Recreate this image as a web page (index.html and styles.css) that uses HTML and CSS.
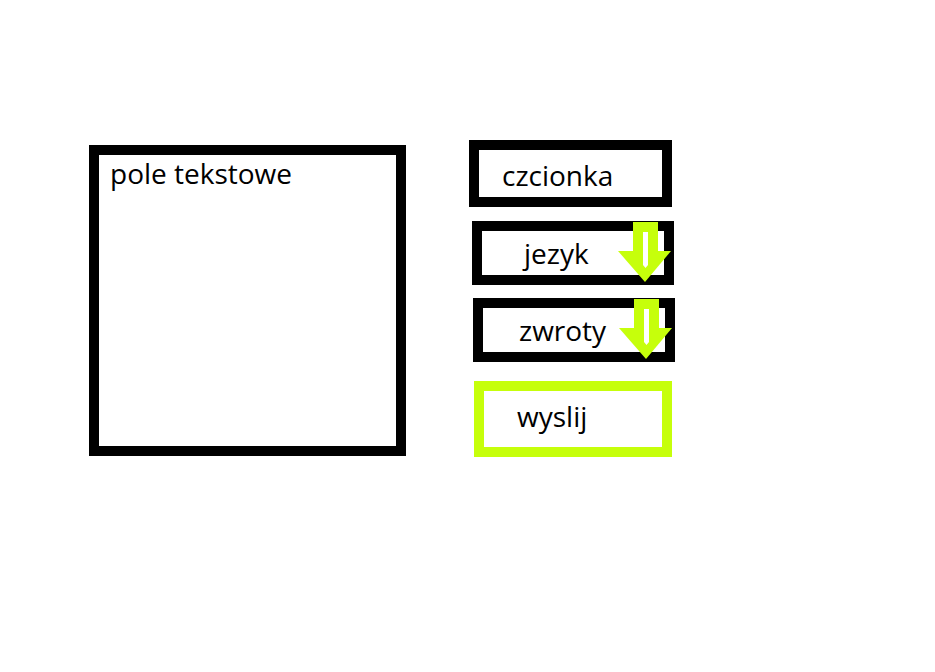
FILE: index.html
```html
<!DOCTYPE html>
<html lang="pl">
<head>
    <meta charset="UTF-8">
    <meta name="viewport" content="width=device-width, initial-scale=1.0">
    <title>Formularz</title>
    <link rel="stylesheet" href="styles.css">
</head>
<body>

<div class="page">
    <div class="text-box">pole tekstowe</div>

    <div class="controls">
        <div class="btn font-btn">czcionka</div>

        <div class="btn select-btn lang-btn">
            jezyk
            <svg class="arrow" viewBox="0 0 53 60" width="53" height="60">
                <rect x="15" y="0" width="25" height="31" fill="#c6ff0b"/>
                <polygon points="0,29 53,29 27,60" fill="#c6ff0b"/>
                <polygon points="25,10 30,10 30,43 27.5,46 25,43" fill="#fff"/>
            </svg>
        </div>

        <div class="btn select-btn phrase-btn">
            zwroty
            <svg class="arrow" viewBox="0 0 53 60" width="53" height="60">
                <rect x="15" y="0" width="25" height="31" fill="#c6ff0b"/>
                <polygon points="0,29 53,29 27,60" fill="#c6ff0b"/>
                <polygon points="25,10 30,10 30,43 27.5,46 25,43" fill="#fff"/>
            </svg>
        </div>

        <div class="btn send-btn">wyslij</div>
    </div>
</div>

</body>
</html>
```

FILE: styles.css
```css
body {
    margin: 0;
    padding: 0;
    background-color: #fff;
    color: #000;
    font-family: "Open Sans", "Noto Sans", sans-serif;
}
.page {
    display: flex;
    align-items: flex-start;
    padding: 140px 0 0 89px;
}
.text-box {
    box-sizing: border-box;
    width: 317px;
    height: 311px;
    margin-top: 5px;
    border: 10px solid #000;
    padding: 1px 0 0 11px;
    font-size: 28px;
    line-height: 34px;
}
.controls {
    display: flex;
    flex-direction: column;
    align-items: flex-start;
    margin-left: 63px;
}
.btn {
    position: relative;
    box-sizing: border-box;
    display: flex;
    align-items: center;
    border: 10px solid #000;
    font-size: 28px;
    line-height: 30px;
}
.font-btn {
    width: 203px;
    height: 67px;
    padding: 2px 0 0 23px;
}
.select-btn {
    width: 202px;
    height: 64px;
    padding-bottom: 0;
}
.lang-btn {
    margin-top: 14px;
    margin-left: 3px;
    padding-left: 42px;
}
.phrase-btn {
    margin-top: 13px;
    margin-left: 4px;
    padding-left: 36px;
}
.send-btn {
    width: 198px;
    height: 76px;
    margin-top: 19px;
    margin-left: 5px;
    padding: 0 0 6px 33px;
    border-color: #c6ff0b;
}
.arrow {
    position: absolute;
    left: 136px;
    top: -9px;
}
```
